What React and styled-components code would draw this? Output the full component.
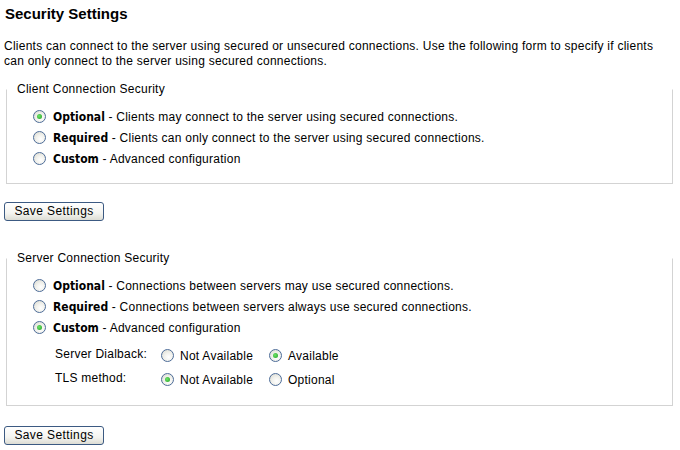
import React from "react";
import styled, { createGlobalStyle } from "styled-components";

const GlobalStyle = createGlobalStyle`
  html, body {
    margin: 0;
    padding: 0;
    background: #ffffff;
  }
  body {
    font-family: "Liberation Sans", Arial, sans-serif;
    font-size: 12px;
    letter-spacing: 0.25px;
    color: #000;
  }
`;

const Page = styled.div`
  padding: 5px 4px 0 4px;
  width: 680px;
  box-sizing: border-box;
`;

const Title = styled.h1`
  margin: 0 0 0 1px;
  font-size: 15px;
  font-weight: bold;
  line-height: 18px;
  letter-spacing: 0;
`;

const Intro = styled.p`
  margin: 16px 0 0;
  line-height: 15px;
  font-size: 12px;
  width: 665px;
`;

const Fieldset = styled.fieldset`
  margin: ${(p) => p.$top}px 0 0 2px;
  padding: 10px 0 ${(p) => p.$bottom}px 10px;
  border: 1px solid #d3d3d3;
  border-top-color: #ffffff;
  width: 667px;
  box-sizing: border-box;
  min-width: 0;
`;

const Legend = styled.legend`
  padding: 0 6px 0 0;
  font-size: 12px;
  line-height: 14px;
`;

const Options = styled.div`
  padding-left: 16px;
`;

const OptionRow = styled.label`
  display: flex;
  align-items: center;
  height: 21px;
  gap: 7px;
`;

const Radio = styled.span`
  width: 13px;
  height: 13px;
  border-radius: 50%;
  box-sizing: border-box;
  border: 1px solid #4d6c98;
  background: radial-gradient(circle at 60% 65%, #ffffff 0%, #f1f1ec 45%, #d6d6cc 100%);
  display: inline-flex;
  align-items: center;
  justify-content: center;
  flex: none;

  &::after {
    content: "";
    width: 5px;
    height: 5px;
    border-radius: 50%;
    background: ${(p) => (p.$checked ? "radial-gradient(circle at 40% 40%, #6ee36a, #21a121)" : "transparent")};
  }
`;

const Strong = styled.b`
  font-family: "DejaVu Sans Condensed", "DejaVu Sans", Verdana, sans-serif;
  font-size: 12px;
  font-weight: bold;
  letter-spacing: 0;
`;

const SubTable = styled.div`
  display: grid;
  grid-template-columns: 106px 108px auto;
  margin: 7px 0 0 22px;
  row-gap: 3px;
  width: max-content;
`;

const SubLabel = styled.div`
  display: flex;
  align-items: center;
  height: 21px;
  padding-bottom: 4px;
  box-sizing: border-box;
`;

const Choice = styled.label`
  display: flex;
  align-items: center;
  gap: 6px;
  height: 21px;
`;

const Button = styled.button`
  display: block;
  margin: ${(p) => p.$top}px 0 0 0;
  height: 19px;
  width: 100px;
  padding: 0 0 1px;
  font-family: "Liberation Sans", Arial, sans-serif;
  font-size: 12px;
  letter-spacing: 0.4px;
  color: #000;
  border: 1px solid #3c5a82;
  border-radius: 3px;
  background: linear-gradient(#ffffff 0%, #f4f4f0 60%, #dcdcd4 100%);
`;

const Option = ({ checked, title, text }) => (
  <OptionRow>
    <Radio $checked={checked} />
    <span>
      <Strong>{title}</Strong> - {text}
    </span>
  </OptionRow>
);

const SubChoice = ({ checked, children }) => (
  <Choice>
    <Radio $checked={checked} />
    {children}
  </Choice>
);

export default function App() {
  return (
    <Page>
      <GlobalStyle />
      <Title>Security Settings</Title>
      <Intro>
        Clients can connect to the server using secured or unsecured connections. Use the following form to specify if clients
        can only connect to the server using secured connections.
      </Intro>

      <Fieldset $top={13} $bottom={14}>
        <Legend>Client Connection Security</Legend>
        <Options>
          <Option checked title="Optional" text="Clients may connect to the server using secured connections." />
          <Option title="Required" text="Clients can only connect to the server using secured connections." />
          <Option title="Custom" text="Advanced configuration" />
        </Options>
      </Fieldset>

      <Button $top={18}>Save Settings</Button>

      <Fieldset $top={30} $bottom={15}>
        <Legend>Server Connection Security</Legend>
        <Options>
          <Option title="Optional" text="Connections between servers may use secured connections." />
          <Option title="Required" text="Connections between servers always use secured connections." />
          <Option checked title="Custom" text="Advanced configuration" />
          <SubTable>
            <SubLabel>Server Dialback:</SubLabel>
            <SubChoice>Not Available</SubChoice>
            <SubChoice checked>Available</SubChoice>
            <SubLabel>TLS method:</SubLabel>
            <SubChoice checked>Not Available</SubChoice>
            <SubChoice>Optional</SubChoice>
          </SubTable>
        </Options>
      </Fieldset>

      <Button $top={20}>Save Settings</Button>
    </Page>
  );
}
